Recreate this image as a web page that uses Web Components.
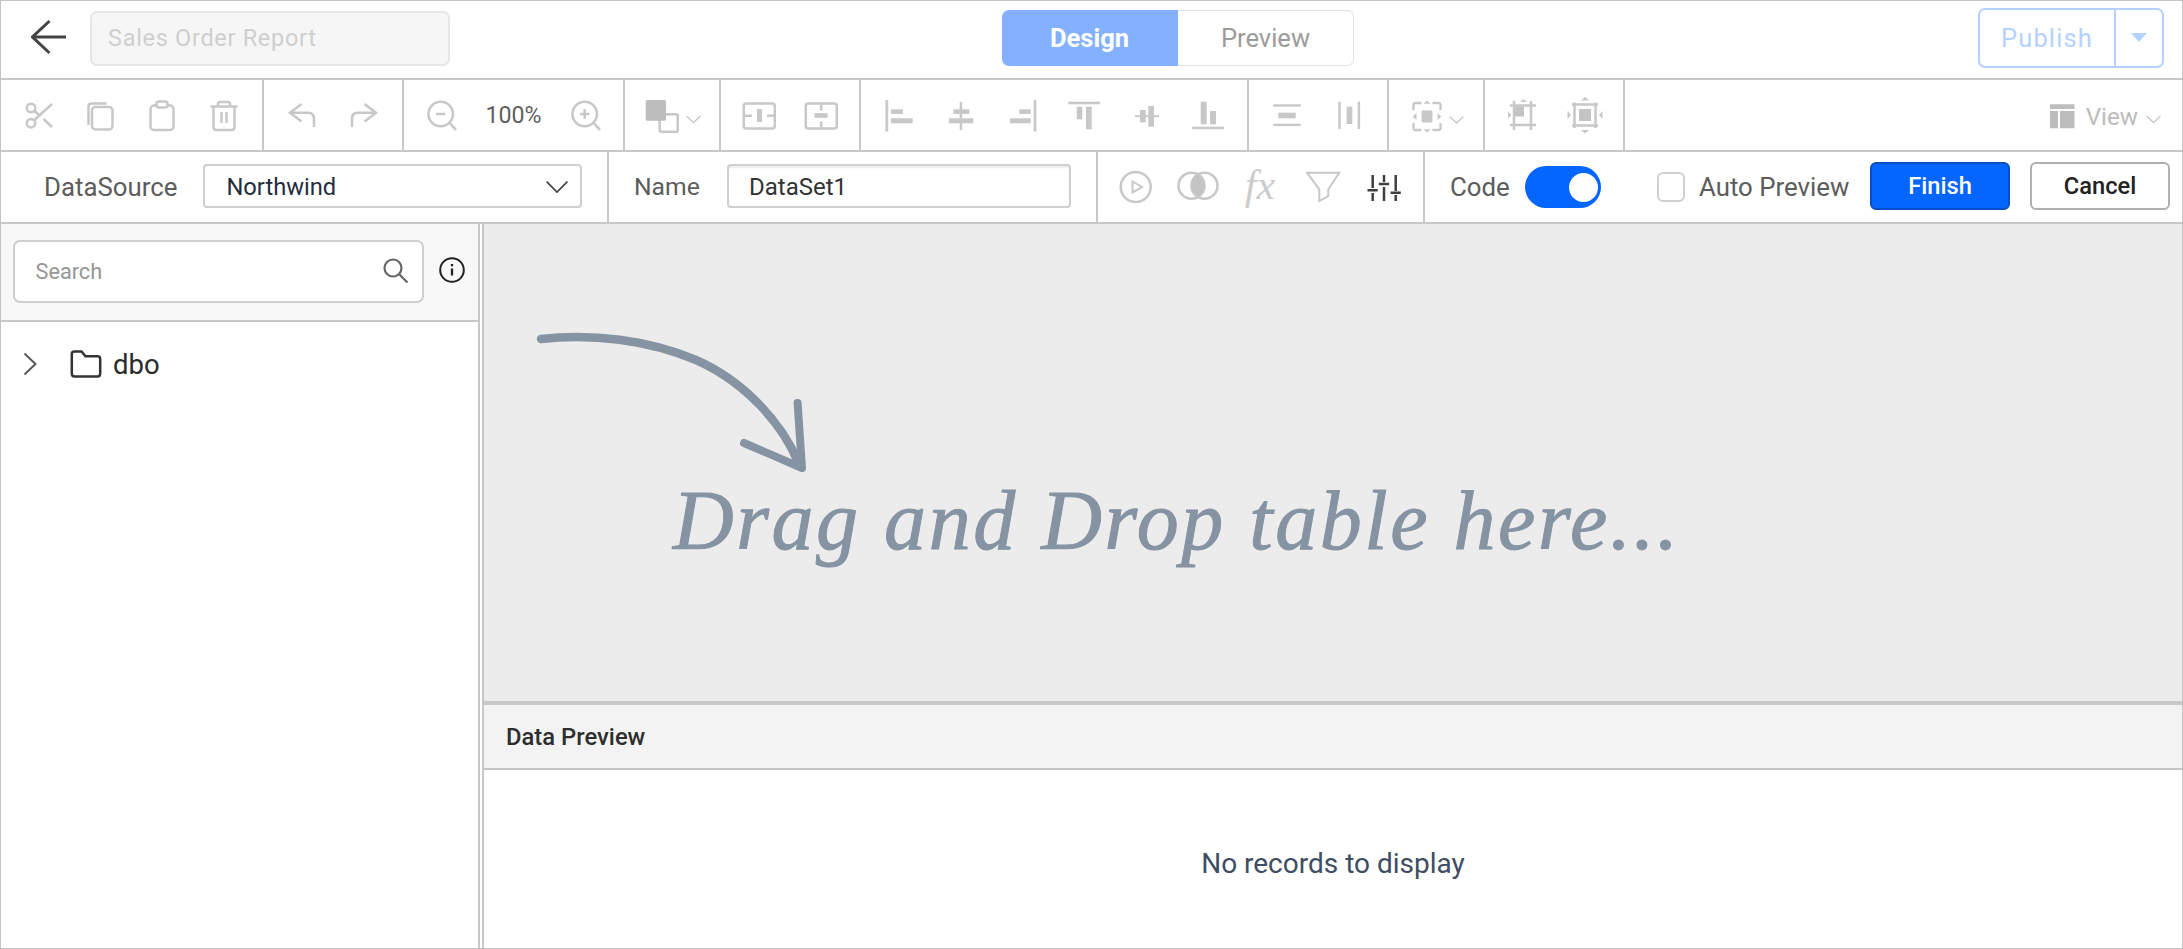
<!DOCTYPE html>
<html><head><meta charset="utf-8"><title>Report</title>
<style>
html,body{margin:0;padding:0;background:#fff;font-family:Roboto,"Liberation Sans",sans-serif}
</style></head><body>
<report-app>
  <top-bar></top-bar>
  <tool-bar>
    <tool-group><tool-btn icon="cut"></tool-btn><tool-btn icon="copy"></tool-btn><tool-btn icon="paste"></tool-btn><tool-btn icon="trash"></tool-btn></tool-group>
    <tool-group><tool-btn icon="undo"></tool-btn><tool-btn icon="redo"></tool-btn></tool-group>
    <tool-group><tool-btn icon="zoomout"></tool-btn><tool-btn w="81"><span>100%</span></tool-btn><tool-btn icon="zoomin"></tool-btn></tool-group>
    <tool-group><tool-btn icon="shape" w="46"></tool-btn><tool-btn icon="caret" w="34"></tool-btn></tool-group>
    <tool-group><tool-btn icon="splith"></tool-btn><tool-btn icon="splitv"></tool-btn></tool-group>
    <tool-group><tool-btn icon="al"></tool-btn><tool-btn icon="ac"></tool-btn><tool-btn icon="ar"></tool-btn><tool-btn icon="at"></tool-btn><tool-btn icon="am"></tool-btn><tool-btn icon="ab"></tool-btn></tool-group>
    <tool-group><tool-btn icon="dv"></tool-btn><tool-btn icon="dh"></tool-btn></tool-group>
    <tool-group><tool-btn icon="sel" w="46"></tool-btn><tool-btn icon="caret2" w="34"></tool-btn></tool-group>
    <tool-group><tool-btn icon="fit1"></tool-btn><tool-btn icon="fit2"></tool-btn></tool-group>
    <view-menu></view-menu>
  </tool-bar>
  <data-bar></data-bar>
  <work-area>
    <side-panel></side-panel>
    <main-pane>
      <drop-canvas></drop-canvas>
      <data-preview></data-preview>
    </main-pane>
  </work-area>
</report-app>
<script>
const F='class="f"';
const rect=(x,y,w,h)=>`<rect ${F} x="${x}" y="${y}" width="${w}" height="${h}"/>`;
const ICONS={
cut:'<circle cx="-7" cy="-7" r="4.3"/><circle cx="-7" cy="8.2" r="4.3"/><path d="M-3.6 5 14-11M-3.6-4.2 1.5.4M5.5 4 14 12"/>',
copy:'<rect x="-8" y="-8" width="20.5" height="22.5" rx="3.5"/><path d="M-11.5 10V-8.500Q-11.500-11.500-8.500-11.500H6.500"/>',
paste:'<rect x="-11.500" y="-9.500" width="23" height="24.500" rx="3.500"/><rect x="-5.500" y="-13.500" width="11" height="6" rx="2.500" fill="#fff"/>',
trash:'<path d="M-13.500-8.500H13.500M-6-9V-11Q-6-13-4-13H4Q6-13 6-11V-9M-10.500-8V12Q-10.500 15-7.500 15H7.500Q10.500 15 10.500 12V-8M-2.500-3V8M2.500-3V8"/>',
undo:'<path d="M-12-2.300H6Q12-2.300 12 3.700V12M-.5-11-12-2.300-.5 6.500"/>',
redo:'<path d="M12-2.300H-6Q-12-2.300-12 3.700V12M.5-11 12-2.300 .5 6.500"/>',
zoomout:'<circle cx="-1.300" cy="-1" r="12.300"/><path d="M7.700 8 14 14.800M-6-1H3.400"/>',
zoomin:'<circle cx="-.3" cy="-1" r="12.300"/><path d="M8.700 8 15 14.800M-5-1H4.400M-.3-5.700V3.700"/>',
shape:'<rect x="4.700" y="-.8" width="18" height="17.500" rx="1.500"/><rect fill="#bdbdbd" stroke="none" x="-9.300" y="-15" width="20.300" height="20.700" rx="1.500"/>',
caret:'<path stroke-width="1.300" d="M-8.500 1-1.500 7.500 5.500 1"/>',
caret2:'<path stroke-width="1.300" d="M-9.500 1.500-2.500 8 4.500 1.500"/>',
splith:'<rect x="-15.200" y="-11.500" width="31" height="25" rx="2.500"/><path d="M-15 .7H-7M8 .7H16"/>'+rect(-2,-6,5,13),
splitv:'<rect x="-15.200" y="-11.500" width="31" height="25" rx="2.500"/><path d="M.2-11.500V-4.500M.2 6.500V13.500"/>'+rect(-6.500,-1.800,13,4.600),
al:rect(-13.500,-15,2.700,31.500)+rect(-8,-5.700,12,4.700)+rect(-8,3.300,21.700,5),
ac:rect(-1.300,-13,2.500,28)+rect(-7.700,-5.700,16,4.700)+rect(-12,3.300,24.300,5),
ar:rect(10.700,-15,2.700,31.500)+rect(-3.700,-5.700,11.400,4.700)+rect(-13,3.300,20.700,5),
at:rect(-16.700,-13.300,31.700,2.600)+rect(-8.300,-8.300,5.600,12.600)+rect(1,-8.300,5.700,22.600),
am:rect(-12,.2,24,2)+rect(-7,-5,5.700,12.300)+rect(1.300,-9,5.700,20.700),
ab:rect(-16.700,11.700,31.700,2.500)+rect(-8.300,-13.300,6,22.600)+rect(1,-4,6,13.300),
dv:rect(-13.700,-10.700,27.400,2.400)+rect(-13.700,8.700,27.400,2.400)+rect(-8.700,-2.300,17.400,5.600),
dh:rect(-10.700,-13.300,2.400,27.300)+rect(8.700,-13.300,2.400,27.300)+rect(-2.300,-8.300,5.600,17.300),
sel:'<g transform="translate(7.500 0)"><g stroke-width="2.300"><path d="M-13-5V-10Q-13-12-11-12H-5M6-12H12Q14-12 14-10V-5M14 8V13Q14 15 12 15H6M-5 15H-11Q-13 15-13 13V8"/></g><rect class="f" x="-5" y="-4.500" width="11" height="12" rx="1.500"/><path class="f" d="M-3-11.300.5-14.500 4-11.300ZM-3 14.300.5 17.500 4 14.300ZM-10-2-13.800 1.500-10 5ZM11-2 14.800 1.500 11 5Z"/></g>',
fit1:'<path d="M-9-14V15M8-14V15M-13-9.500H13M-13 10H13" stroke-width="2.500"/><rect fill="#c4c4c4" stroke="none" x="-8" y="-8.500" width="9" height="10"/><path class="f" d="M-15-3.500-11.500 0-15 3.500ZM-3-13 .5-16 4-13Z"/>',
fit2:'<path d="M-10.500-12.500V13M10.500-12.500V13M-13-10.500H13M-13 10.500H13" stroke-width="2.500"/><rect fill="#c4c4c4" stroke="none" x="-6" y="-6" width="12" height="12"/><path class="f" d="M-17.500-4-14 0-17.500 4ZM17.500-4 14 0 17.500 4ZM-4-14.500 0-18 4-14.500ZM-4 15 0 18.500 4 15Z"/>',
view:'<path fill="#bdbdbd" stroke="none" d="M-12-11.700H12.500V-7H-12ZM-12-5H-4V12.300H-12ZM-2-5H12.500V12.300H-2Z"/>'
};
function icon(n,size=40){return `<svg width="${size}" height="${size}" viewBox="-20 -20 40 40" fill="none" stroke="#c8c8c8" stroke-width="2.500" style="overflow:visible;display:block"><style>.f{fill:#c8c8c8;stroke:none}</style>${ICONS[n]||''}</svg>`;}
function def(name,html,init){customElements.define(name,class extends HTMLElement{constructor(){super();this.attachShadow({mode:'open'}).innerHTML=typeof html==='function'?html(this):html;}connectedCallback(){if(init)init(this);}});}

def('report-app',`<style>:host{display:flex;flex-direction:column;box-sizing:border-box;width:2183px;height:949px;border:1px solid #c4c4c4;font-family:Roboto,"Liberation Sans",sans-serif;overflow:hidden;background:#fff}</style><slot></slot>`);

def('top-bar',`<style>
:host{display:flex;align-items:center;flex:none;box-sizing:border-box;height:79px;border-bottom:2px solid #c8c8c8}
.left{display:flex;align-items:center;width:1001px;flex:none}
.back{width:36px;height:36px;margin:0 0 6px 30px;flex:none}
.name{box-sizing:border-box;margin:0 0 3px 23px;width:360px;height:55px;border:2px solid #e6e6e6;border-radius:7px;background:#f6f6f6;color:#cfcfcf;font-size:23.500px;letter-spacing:.7px;display:flex;align-items:center;padding-left:16px}
.tabs{display:flex;height:56px;width:352px;flex:none;font-size:25.500px;margin-top:-3px}
.tabs b{flex:none;width:176px;background:#84b1ff;color:#fff;font-weight:700;border-radius:7px 0 0 7px;display:flex;align-items:center;justify-content:center;padding-right:1px;box-sizing:border-box}
.tabs span{flex:1;box-sizing:border-box;border:1.500px solid #e3e3e3;border-left:none;border-radius:0 7px 7px 0;color:#9c9c9c;display:flex;align-items:center;justify-content:center}
.pub{box-sizing:border-box;margin-left:auto;margin-right:18px;width:186px;height:60px;border:2px solid #b5d2ff;border-radius:7px;display:flex;margin-top:-4px}
.pub span{width:136px;box-sizing:border-box;border-right:2px solid #b5d2ff;color:#b5d2ff;font-size:25.500px;letter-spacing:1.100px;display:flex;align-items:center;justify-content:center}
.pub i{flex:1;display:flex;align-items:center;justify-content:center}
</style>
<div class="left"><svg class="back" viewBox="0 0 36 36" fill="none" stroke="#444" stroke-width="3"><path d="M1.500 18H35M18.500 2 1.500 18 18.500 34"/></svg><div class="name">Sales Order Report</div></div>
<div class="tabs"><b>Design</b><span>Preview</span></div>
<div class="pub"><span>Publish</span><i><svg width="16" height="9" viewBox="0 0 16 9"><path fill="#b5d2ff" d="M0 0H16L8 9Z"/></svg></i></div>`);

def('tool-bar',`<style>:host{display:flex;flex:none;box-sizing:border-box;height:72px;border-bottom:2px solid #c8c8c8}::slotted(tool-group:first-child){padding-left:6px}</style><slot></slot>`);
def('tool-group',`<style>:host{display:flex;flex:none;padding:0 7px;border-right:2px solid #c8c8c8}</style><slot></slot>`);
def('tool-btn',el=>{const w=el.getAttribute('w')||62;const ic=el.getAttribute('icon');return `<style>:host{display:flex;align-items:center;justify-content:center;width:${w}px;height:70px;flex:none;font-size:23.200px;color:#5f5f5f}</style>${ic?icon(ic):''}<slot></slot>`;});
def('view-menu',`<style>:host{display:flex;align-items:center;margin-left:auto;height:70px;font-size:24.200px;color:#bcbcbc;padding-right:19px}
span{margin:4px 0 0 12px}svg{display:block}</style>${icon('view',24).replace('width="24" height="24"','width="40" height="40" style="margin:2px -8px 0 0;overflow:visible;display:block"')}<span>View</span>${icon('caret',40).replace('width="40" height="40"','width="16" height="40" ').replace('viewBox="-20 -20 40 40"','viewBox="-8 -20 16 40"').replace('display:block','display:block;margin:-1px 0 0 9px')}`);

def('data-bar',`<style>
:host{display:flex;flex:none;box-sizing:border-box;height:72px;border-bottom:2px solid #c8c8c8;font-size:25.800px;color:#5c5c5c}
.sec{display:flex;align-items:center;flex:none;box-sizing:border-box;border-right:2px solid #c8c8c8;height:70px}
.s1{width:608px;padding-left:43px}.s2{width:489px;padding-left:25px}.s3{width:327px;padding-left:7px}
.s4{flex:1;padding-left:25px;border:none}
.lb{white-space:nowrap}
.select,.input{box-sizing:border-box;height:44px;border:2px solid #cfcfcf;border-radius:4px;display:flex;align-items:center;color:#1f2d3d;margin-top:-3px;background:#fff}
.select{margin-left:26px;width:379px;padding:2px 12px 0 21px;justify-content:space-between;font-size:23.700px}
.lb.n{width:68px;font-size:24.700px;margin-top:-2px}
.input{margin-left:25px;width:344px;padding:2px 0 0 20px;font-size:24px;color:#333;box-shadow:inset 0 2px 2px #eee}
.ib{width:62px;height:70px;display:flex;align-items:center;justify-content:center;flex:none}
.fx{font:italic 42px "Liberation Serif",serif;color:#cdcdcd;margin-top:-5px}
.code{width:61px;margin-right:14px}
.toggle{box-sizing:border-box;width:76px;height:42px;border-radius:21px;background:#0565ff;display:flex;align-items:center;justify-content:flex-end;padding-right:3px;flex:none}
.toggle i{width:29px;height:29px;border-radius:50%;background:#fff}
.check{box-sizing:border-box;width:28px;height:30px;border:2px solid #d0d0d0;border-radius:6px;margin-left:56px;flex:none}
.auto{font-size:25.800px;margin-left:14px;width:150px;white-space:nowrap}
.btn{box-sizing:border-box;height:48px;border-radius:6px;display:flex;align-items:center;justify-content:center;font-size:23.700px;font-weight:500;flex:none;margin-top:-3px}
.finish{width:140px;margin-left:21px;background:#0565ff;border:2px solid #0a50c4;color:#fff}
.cancel{width:140px;margin-left:20px;background:#fff;border:2px solid #b0b0b0;color:#222}
svg{display:block;overflow:visible}
</style>
<div class="sec s1"><span class="lb">DataSource</span><div class="select"><span>Northwind</span><svg width="22" height="12" viewBox="0 0 22 12" fill="none" stroke="#444" stroke-width="1.700"><path d="M.6.6 11 11 21.400.6"/></svg></div></div>
<div class="sec s2"><span class="lb n">Name</span><div class="input">DataSet1</div></div>
<div class="sec s3">
 <div class="ib"><svg width="40" height="40" viewBox="-20 -20 40 40" fill="none" stroke="#c8c8c8" stroke-width="2.500"><circle cx="-.3" cy="0" r="15"/><path stroke-width="2" d="M-3.500-5.500 6 0-3.500 5.500Z"/></svg></div>
 <div class="ib"><svg width="40" height="40" viewBox="-20 -20 40 40" fill="none" stroke="#c8c8c8" stroke-width="2.500"><circle cx="-6.500" cy="-1.300" r="13"/><circle cx="6.500" cy="-1.300" r="13"/><path fill="#c4c4c4" stroke="none" d="M0-12.500A13 13 0 0 1 0 9.900 13 13 0 0 1 0-12.500Z"/></svg></div>
 <div class="ib"><span class="fx">fx</span></div>
 <div class="ib"><svg width="40" height="40" viewBox="-20 -20 40 40" fill="none" stroke="#c8c8c8" stroke-width="2"><path d="M-15-14.300H17.300L6.300 2.300V9L-2.700 14V2.300Z"/></svg></div>
 <div class="ib"><svg width="40" height="40" viewBox="-20 -20 40 40" fill="none" stroke="#3f3f3f" stroke-width="2.500"><path d="M-11.300-12V1M-11.300 6V14M0-12V-5M0 0V14M11.700-12V4M11.700 8V14M-16.500 3.200H-6.300M-5.200-3H5.200M6.600 5.700H16.800"/></svg></div>
</div>
<div class="sec s4"><span class="code">Code</span><div class="toggle"><i></i></div><div class="check"></div><span class="auto">Auto Preview</span><div class="btn finish">Finish</div><div class="btn cancel">Cancel</div></div>`);

def('work-area',`<style>:host{display:flex;flex:1;min-height:0}</style><slot></slot>`);
def('side-panel',`<style>
:host{display:block;flex:none;box-sizing:border-box;width:479px;margin-right:2px;border-right:2px solid #c8c8c8;background:#fff}
.head{box-sizing:border-box;height:98px;background:#f8f8f8;border-bottom:2px solid #c8c8c8;display:flex;align-items:flex-start;padding:16px 0 0 11.500px}
.box{box-sizing:border-box;width:411px;height:63px;border:2px solid #cfcfcf;border-radius:7px;background:#fff;display:flex;align-items:center;justify-content:space-between;padding:0 13px 0 21px;font-size:21.700px;color:#969696}
.info{margin:17px 0 0 15px;display:block}
.row{display:flex;align-items:center;height:56px;margin-top:14px;padding-left:22px;font-size:27.500px;color:#2b2b2b}
.row svg{display:block;flex:none}
</style>
<div class="head"><div class="box"><span>Search</span><svg width="26" height="26" viewBox="0 0 26 26" fill="none" stroke="#666" stroke-width="2.200" style="margin-top:-2px"><circle cx="10" cy="10" r="8.500"/><path d="M16 16 24.500 24.500"/></svg></div>
<svg class="info" width="26" height="26" viewBox="0 0 26 26" fill="none" stroke="#222" stroke-width="2"><circle cx="13" cy="13" r="11.800"/><path stroke-width="2.300" d="M13 11.500V18.500M13 7V9.300"/></svg></div>
<div class="row"><svg width="14" height="24" viewBox="0 0 14 24" fill="none" stroke="#555" stroke-width="1.900"><path d="M1.500 1.500 12.500 12 1.500 22.500"/></svg>
<svg width="32" height="28" viewBox="0 0 31 28" fill="none" stroke="#333" stroke-width="2.500" style="margin:0 11px 0 33px"><path d="M1.300 4Q1.300 1.500 3.800 1.500H11L15 6.300H27Q29.700 6.300 29.700 9V23.500Q29.700 26.500 27 26.500H4Q1.300 26.500 1.300 23.500Z"/></svg><span>dbo</span></div>`);
def('main-pane',`<style>:host{display:flex;flex-direction:column;flex:1;min-width:0;border-left:2px solid #c8c8c8}</style><slot></slot>`);
def('drop-canvas',`<style>
:host{display:block;flex:1;min-height:0;background:#ececec;box-sizing:border-box;padding:106px 0 0 47px;overflow:hidden}
svg{display:block}
.t{font:italic 84px/100px "Liberation Serif",serif;color:#8593a3;letter-spacing:2.550px;margin:-9px 0 0 142px;white-space:nowrap;-webkit-text-stroke:1px #8593a3}
</style>
<svg width="280" height="150" viewBox="0 0 280 150" fill="none" stroke="#8593a3" stroke-width="8.500" stroke-linecap="round" stroke-linejoin="round"><path d="M10 9C60 3 118 10 165 30 215 52 252 95 267 132"/><path stroke-width="8" d="M266.600 73 271 138 213 113"/></svg>
<div class="t">Drag and Drop table here...</div>`);
def('data-preview',`<style>
:host{display:flex;flex-direction:column;flex:none;height:247px;border-top:4px solid #c8c8c8;box-sizing:border-box}
.h{box-sizing:border-box;height:65px;flex:none;background:#f3f3f3;border-bottom:2px solid #c4c4c4;display:flex;align-items:center;padding-left:22px;font-size:23.800px;font-weight:500;color:#2e2e2e}
.b{flex:1;display:flex;align-items:center;justify-content:center;padding-top:9px;font-size:28px;color:#3e4d63}
</style><div class="h">Data Preview</div><div class="b">No records to display</div>`);
</script>
</body></html>
